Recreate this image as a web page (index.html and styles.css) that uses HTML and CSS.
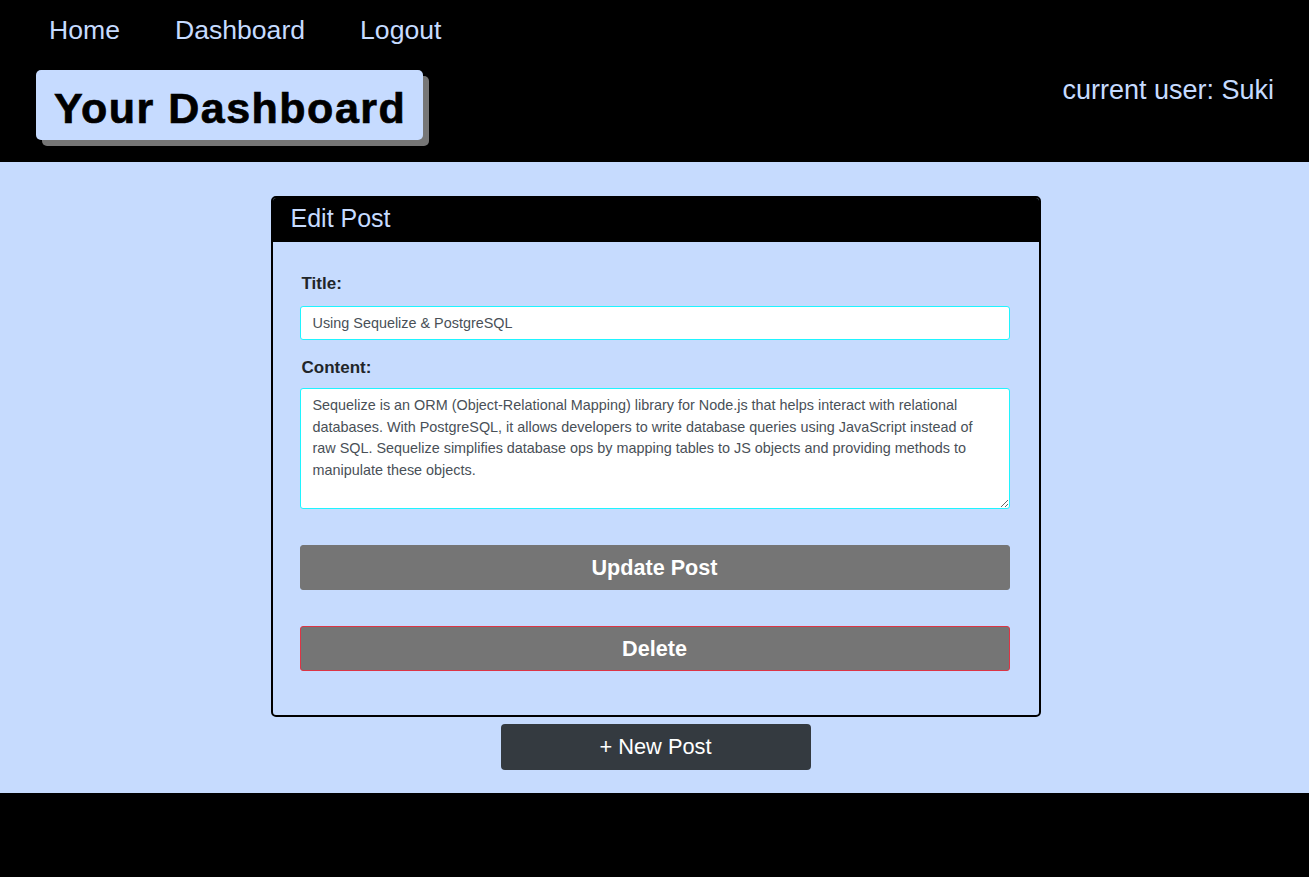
FILE: index.html
```html
<!DOCTYPE html>
<html lang="en">
<head>
<meta charset="utf-8">
<title>Your Dashboard</title>
<link rel="stylesheet" href="styles.css">
</head>
<body>
<header class="site-header">
  <nav class="main-nav">
    <a href="#" class="nav-link">Home</a>
    <a href="#" class="nav-link">Dashboard</a>
    <a href="#" class="nav-link">Logout</a>
  </nav>
  <div class="header-row">
    <h1 class="page-title">Your Dashboard</h1>
    <div class="current-user">current user: Suki</div>
  </div>
</header>
<main class="main">
  <section class="card">
    <div class="card-header">Edit Post</div>
    <form class="card-body">
      <div class="form-group">
        <label class="form-label" for="title">Title:</label>
        <input class="form-control" id="title" type="text" value="Using Sequelize &amp; PostgreSQL">
      </div>
      <div class="form-group">
        <label class="form-label label-content" for="content">Content:</label>
        <textarea class="form-control textarea" id="content">Sequelize is an ORM (Object-Relational Mapping) library for Node.js that helps interact with relational databases. With PostgreSQL, it allows developers to write database queries using JavaScript instead of raw SQL. Sequelize simplifies database ops by mapping tables to JS objects and providing methods to manipulate these objects.</textarea>
      </div>
      <button type="button" class="btn btn-update">Update Post</button>
      <button type="button" class="btn btn-delete">Delete</button>
    </form>
  </section>
  <button type="button" class="btn-new">+ New Post</button>
</main>
<footer class="site-footer"></footer>
</body>
</html>
```

FILE: styles.css
```css
* { box-sizing: border-box; }

html, body {
  margin: 0;
  padding: 0;
}

body {
  font-family: "Liberation Sans", Arial, sans-serif;
  background: #000;
  color: #212529;
}

.site-header {
  background: #000;
  height: 162px;
  padding-top: 15px;
}

.main-nav {
  display: flex;
  gap: 55px;
  padding-left: 49px;
}

.nav-link {
  color: #c6dbff;
  text-decoration: none;
  font-size: 26.6px;
  line-height: 31px;
}

.header-row {
  display: flex;
  justify-content: space-between;
  align-items: flex-start;
  margin-top: 24px;
  padding: 0 35px 0 36px;
}

.page-title {
  margin: 0;
  background: #c6dbff;
  color: #000;
  font-size: 43px;
  font-weight: bold;
  letter-spacing: 1.5px;
  -webkit-text-stroke: 0.7px #000;
  line-height: 50px;
  padding: 13px 17px 7px 18px;
  border-radius: 5px;
  box-shadow: 6px 6px 0 #767676;
}

.current-user {
  color: #c6dbff;
  font-size: 27px;
  line-height: 31px;
  margin-top: 5px;
}

.main {
  background: #c6dbfe;
  padding: 34px 0 23px 2px;
  display: flex;
  flex-direction: column;
  align-items: center;
}

.card {
  width: 770px;
  border: 2px solid #000;
  border-radius: 5px;
  overflow: hidden;
}

.card-header {
  background: #000;
  color: #c6dbff;
  font-size: 25px;
  height: 44px;
  line-height: 40px;
  padding-left: 18px;
}

.card-body {
  padding: 29px 29px 44px 27px;
  display: flex;
  flex-direction: column;
}

.form-group {
  margin-bottom: 15px;
}

.form-label {
  display: block;
  font-size: 17px;
  font-weight: bold;
  line-height: 25px;
  margin-bottom: 10px;
  padding-left: 2px;
}

.label-content {
  margin-bottom: 9px;
}

.form-control {
  display: block;
  width: 710px;
  background: #fff;
  border: 1px solid #1ff4ff;
  border-radius: 3px;
  font-family: "Liberation Sans", Arial, sans-serif;
  font-size: 14.4px;
  color: #495057;
  height: 34px;
  padding: 6px 12px;
  outline: none;
}

.textarea {
  height: 121px;
  line-height: 21.6px;
  resize: vertical;
  margin-top: -1px;
}

.btn {
  width: 710px;
  height: 45px;
  border-radius: 3px;
  background: #757575;
  color: #fff;
  font-family: "Liberation Sans", Arial, sans-serif;
  font-size: 21.6px;
  font-weight: bold;
  border: 1px solid #757575;
  cursor: pointer;
}

.btn-update {
  margin-top: 21px;
}

.btn-delete {
  margin-top: 36px;
  border: 1px solid #dc3545;
}

.btn-new {
  margin-top: 7px;
  width: 310px;
  height: 46px;
  background: #343a40;
  color: #fff;
  border: none;
  border-radius: 4px;
  font-family: "Liberation Sans", Arial, sans-serif;
  font-size: 21.8px;
  cursor: pointer;
}

.site-footer {
  background: #000;
  height: 84px;
}
```
